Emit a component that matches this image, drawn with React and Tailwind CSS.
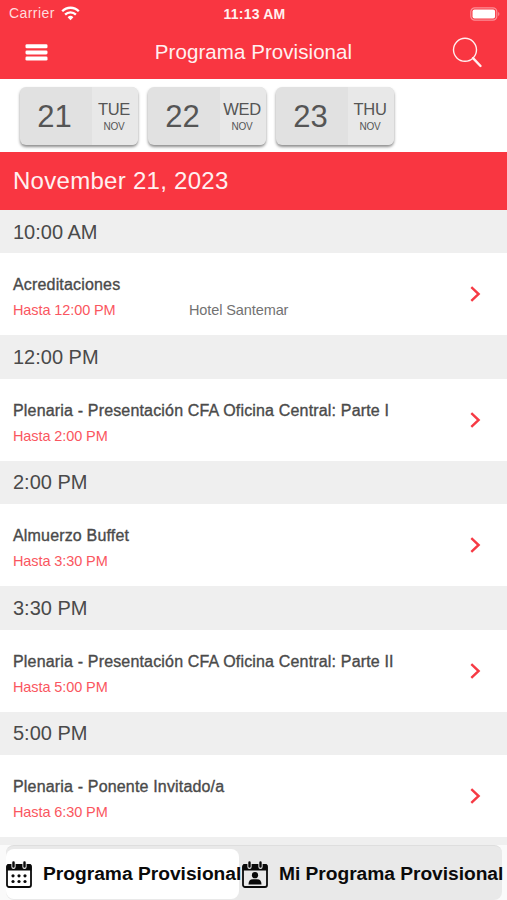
const days = [
  { number: "21", day: "TUE", month: "NOV" },
  { number: "22", day: "WED", month: "NOV" },
  { number: "23", day: "THU", month: "NOV" },
];

const sessions = [
  { time: "10:00 AM", title: "Acreditaciones", until: "Hasta 12:00 PM", place: "Hotel Santemar" },
  { time: "12:00 PM", title: "Plenaria - Presentación CFA Oficina Central: Parte I", until: "Hasta 2:00 PM" },
  { time: "2:00 PM", title: "Almuerzo Buffet", until: "Hasta 3:30 PM" },
  { time: "3:30 PM", title: "Plenaria - Presentación CFA Oficina Central: Parte II", until: "Hasta 5:00 PM" },
  { time: "5:00 PM", title: "Plenaria - Ponente Invitado/a", until: "Hasta 6:30 PM" },
];

function StatusBar() {
  return (
    <div className="grid grid-cols-3 items-center h-[27px] pl-[9px] pr-[7px] text-[14px]">
      <div className="flex items-center gap-[6px]">
        <span className="tracking-[0.42px] text-[#ffdcde]">Carrier</span>
        <svg width="19" height="15" viewBox="0 0 19 15" fill="none" stroke="white" strokeWidth="2.3">
          <path d="M1.2 5.2a11.7 11.7 0 0 1 16.6 0" />
          <path d="M4.1 8.6a7.6 7.6 0 0 1 10.8 0" />
          <path d="M9.5 14.3 6.6 11.3a4.1 4.1 0 0 1 5.8 0Z" fill="white" stroke="none" />
        </svg>
      </div>
      <span className="text-center font-bold text-[14px] tracking-[0.2px] pt-[1px] whitespace-nowrap text-[#fff0f0]">11:13 AM</span>
      <svg className="justify-self-end" width="30" height="14" viewBox="0 0 30 14">
        <rect x="0.8" y="0.8" width="26" height="12.4" rx="4" fill="none" stroke="#fb8f97" strokeWidth="1.2" />
        <rect x="2.5" y="2.5" width="22.6" height="9" rx="2" fill="white" />
        <path d="M28.2 5v4c1.6-.6 1.6-3.4 0-4Z" fill="#fb8f97" />
      </svg>
    </div>
  );
}

function Header() {
  return (
    <div className="flex items-center justify-between h-[50px] pl-[25px] pr-[24px]">
      <svg width="23" height="17" viewBox="0 0 23 17" fill="white">
        <rect x="0.5" y="0.3" width="22" height="4" rx="1.3" />
        <rect x="0.5" y="6.4" width="22" height="4" rx="1.3" />
        <rect x="0.5" y="12.5" width="22" height="4" rx="1.3" />
      </svg>
      <h1 className="text-[20.5px] tracking-[0.07px] pl-[7px] pt-[1px] text-[#fff0f0]">Programa Provisional</h1>
      <svg width="31" height="31" viewBox="0 0 31 31" fill="none" stroke="#fff0f0" strokeLinecap="round">
        <circle cx="13" cy="12.8" r="11.5" strokeWidth="1.4" />
        <path d="M21 21.2 28.5 29" strokeWidth="2.4" />
      </svg>
    </div>
  );
}

function DayCard({ day }) {
  return (
    <div className="flex w-[118px] h-[58px] rounded-[6px] overflow-hidden bg-[#e1e1e1] text-[#555] shadow-[0_2px_3px_rgba(0,0,0,0.45)]">
      <div className="flex items-center justify-center w-[72px] text-[31px] pr-[3px] pt-[3px]">{day.number}</div>
      <div className="flex flex-col items-center w-[46px] bg-[#e8e8e8] pt-[13px] pr-[2px]">
        <span className="text-[16.5px] leading-[18px] tracking-[-0.3px]">{day.day}</span>
        <span className="text-[10px] leading-[12px] mt-[3px] tracking-[-0.3px]">{day.month}</span>
      </div>
    </div>
  );
}

function Session({ session }) {
  return (
    <div>
      <div className="flex items-center h-[43.4px] px-[13px] bg-[#efefef] text-[20px] text-[#4a4a4a]">
        {session.time}
      </div>
      <div className="flex items-center justify-between h-[82px] pl-[13px] pr-[26px]">
        <div className="pt-[7px]">
          <p className="text-[16px] leading-[25px] tracking-[0.17px] text-[#4a4a4a] [-webkit-text-stroke:0.35px_#4a4a4a] whitespace-nowrap">
            {session.title}
          </p>
          <div className="flex text-[14.5px] leading-[26px] tracking-[-0.1px]">
            <span className="w-[176px] text-[#fa5660]">{session.until}</span>
            <span className="text-[#727272]">{session.place}</span>
          </div>
        </div>
        <svg width="11" height="16" viewBox="0 0 11 16" fill="none" stroke="#f63a44" strokeWidth="2.4">
          <path d="M1.3 1.2 8.6 8 1.3 14.8" />
        </svg>
      </div>
    </div>
  );
}

function CalendarIcon({ children }) {
  return (
    <svg className="shrink-0" width="26" height="27" viewBox="0 0 26 27" fill="none">
      <rect x="1" y="4" width="24" height="22" rx="2" stroke="#0a0a0a" strokeWidth="1.8" />
      <path d="M0.5 9.5V5q0-2 2-2h21q2 0 2 2v4.5Z" fill="#0a0a0a" />
      <path d="M7.5 2v4M18.5 2v4" stroke="#eee" strokeWidth="4.2" strokeLinecap="round" />
      <path d="M7.5 1.5v4M18.5 1.5v4" stroke="#0a0a0a" strokeWidth="2.4" strokeLinecap="round" />
      {children}
    </svg>
  );
}

function Tabs() {
  return (
    <div className="h-[63px] shrink-0 bg-[#fafafa] border-t-8 border-[#efefef]">
      <div className="flex h-[55px] ml-[6px] mr-[5px] pt-[3px] pb-[1px] rounded-[8px] bg-[#e9e9e9] border-t border-[#dedede] text-[19.2px] font-bold text-[#0a0a0a] whitespace-nowrap">
        <div className="flex items-center gap-[11px] w-[233px] rounded-[8px] bg-white">
          <CalendarIcon>
            <g fill="#0a0a0a">
              <circle cx="7" cy="14.8" r="1.6" />
              <circle cx="13" cy="14.8" r="1.6" />
              <circle cx="19" cy="14.8" r="1.6" />
              <circle cx="7" cy="20.5" r="1.6" />
              <circle cx="13" cy="20.5" r="1.6" />
              <circle cx="19" cy="20.5" r="1.6" />
            </g>
          </CalendarIcon>
          <span>Programa Provisional</span>
        </div>
        <div className="flex items-center gap-[11px] pl-[3px]">
          <CalendarIcon>
            <circle cx="13" cy="14.2" r="3.1" fill="#0a0a0a" />
            <path d="M6.5 23.5q0-5.3 4.5-5.3h4q4.5 0 4.5 5.3Z" fill="#0a0a0a" />
          </CalendarIcon>
          <span className="tracking-[-0.03px]">Mi Programa Provisional</span>
        </div>
      </div>
    </div>
  );
}

export default function App() {
  return (
    <div className="flex flex-col h-[900px] w-full overflow-hidden bg-white font-['Liberation_Sans',Arial,sans-serif]">
      <div className="shrink-0 h-[79px] bg-[#f93641] text-white">
        <StatusBar />
        <Header />
      </div>
      <div className="flex shrink-0 h-[73px] gap-[10px] pl-[20px] pt-[8px]">
        {days.map((day) => (
          <DayCard key={day.number} day={day} />
        ))}
      </div>
      <div className="flex items-center shrink-0 h-[58px] px-[13px] bg-[#f93641] text-[24px] text-[#fff0f0] tracking-[0.28px]">
        November 21, 2023
      </div>
      <div className="flex-1 min-h-0 overflow-hidden">
        {sessions.map((session) => (
          <Session key={session.time} session={session} />
        ))}
      </div>
      <Tabs />
    </div>
  );
}
